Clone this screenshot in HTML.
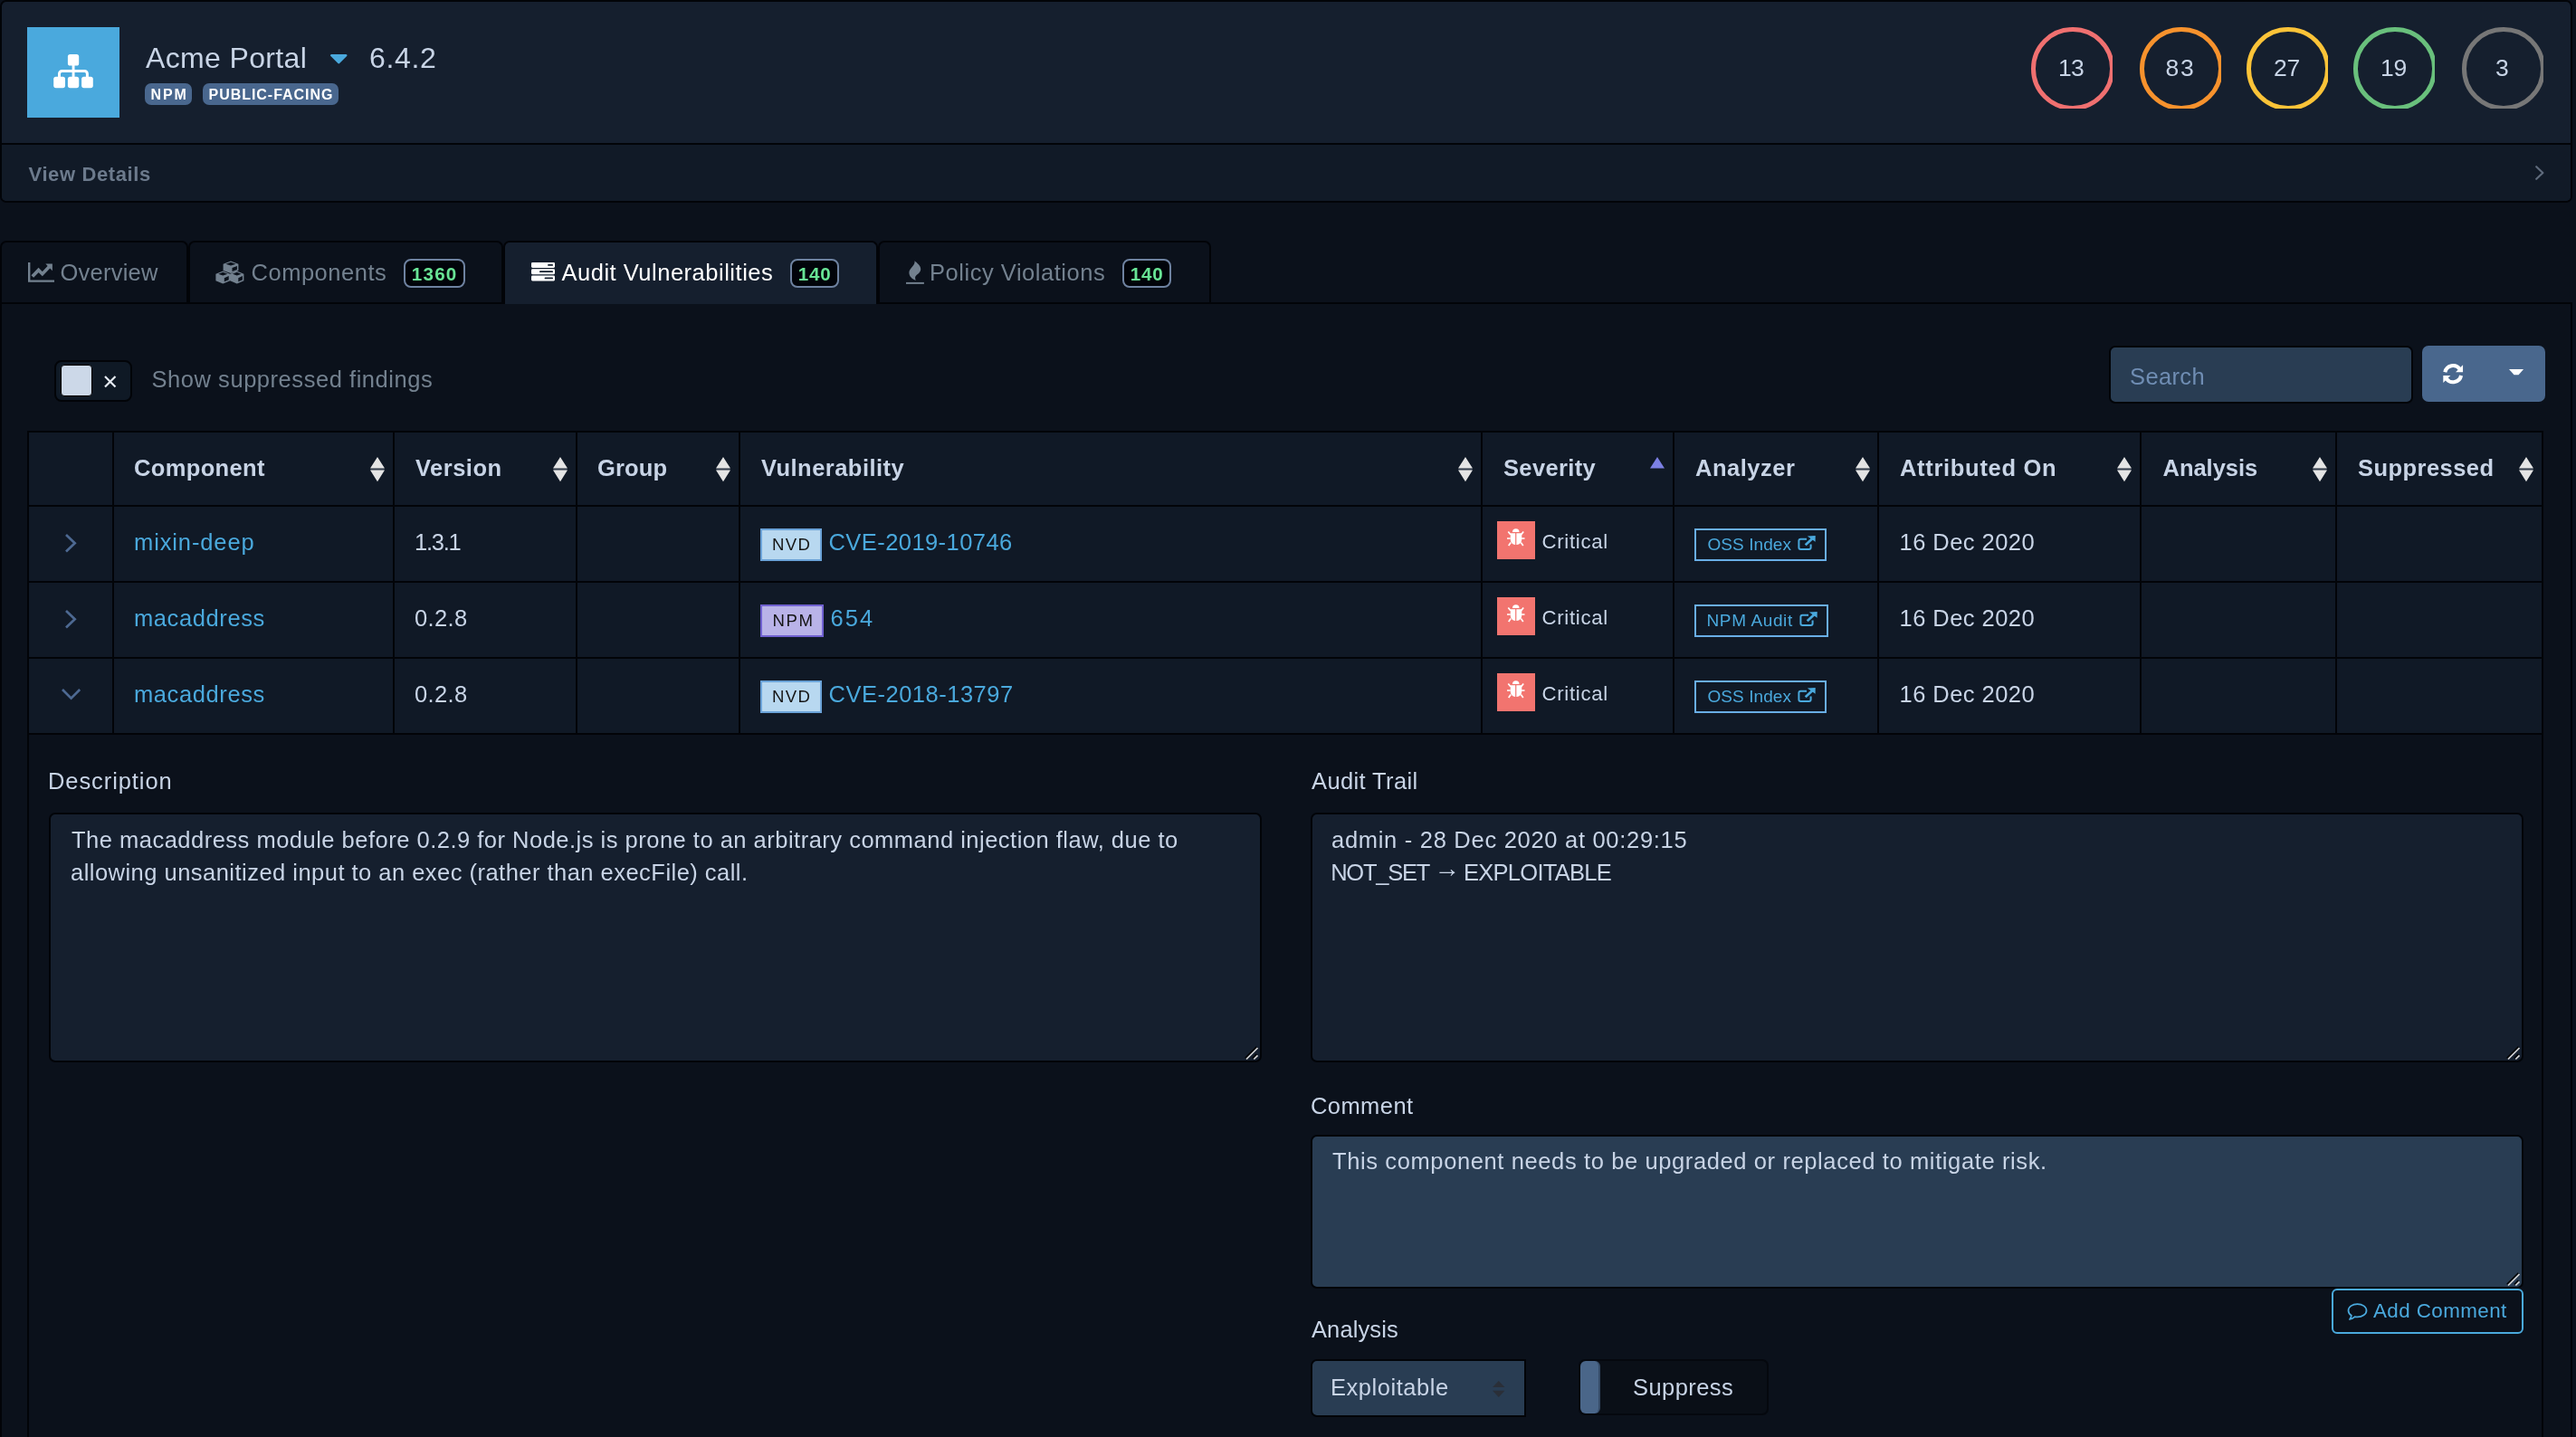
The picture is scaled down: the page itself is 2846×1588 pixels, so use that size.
<!DOCTYPE html>
<html lang="en">
<head>
<meta charset="utf-8">
<title>Dependency-Track - Acme Portal</title>
<style>
*{box-sizing:border-box;margin:0;padding:0}
html,body{width:2846px;height:1588px;overflow:hidden}
body{position:relative;background:#0b111b;font-family:"Liberation Sans",sans-serif;color:#c8d4e6}
.abs,.t,.cell,.tab,.ring,.badge,.pill{position:absolute}
.t{white-space:pre;line-height:1;display:block}
.texts{position:absolute;left:0;top:0;width:2846px;height:1588px;z-index:10;will-change:transform}
svg{position:absolute;display:block;overflow:visible}
.card{left:0;top:0;width:2842px;height:224px;background:#151f2e;border:2px solid #020408;border-radius:7px;overflow:hidden}
.card-footer{left:0;top:156px;width:2838px;height:64px;background:#111a27;border-top:2px solid #020408}
.logo{left:30px;top:30px;width:102px;height:100px;background:#4aa9dd}
.pill{height:24px;top:92px;background:#49678e;border-radius:7px}
.ringbox{position:absolute;top:30px;width:90px;height:90px;overflow:hidden}
.ring{left:0;top:0;width:91.5px;height:91.5px;border-radius:50%;border:5.5px solid}
.tab{top:266px;height:68px;border:2px solid #020408;border-bottom:none;border-radius:7px 7px 0 0;background:#0b111b}
.tab.active{background:#151f2e;height:70px;z-index:2}
.tabcontent{left:0;top:334px;width:2842px;height:1300px;border:2px solid #020408;background:#0b111b}
.badge{top:286px;height:32px;border:2.3px solid #6e82a0;border-radius:8px;background:#01040a}
.switch{left:60px;top:398px;width:86px;height:46px;border:2px solid #020408;border-radius:8px;background:#0f1925}
.switch i{position:absolute;left:4.5px;top:2.5px;width:35px;height:35px;background:#ccd8e8;border:1.5px solid #000;border-radius:4px}
.search{left:2330px;top:382px;width:336px;height:64px;border:2px solid #020408;border-radius:7px;background:#293d53}
.btngroup{left:2676px;top:382px;width:136px;height:62px;border-radius:7px;background:#49678d}
.table{left:30px;top:476px;width:2780px;height:1200px;background:#020408}
.cell{background:#101926}
.detail{left:32px;top:812px;width:2776px;height:800px;background:#0b111b}
.ta{border:2px solid #020408;border-radius:7px;background:#151f2e}
.ta.edit{background:#293d53}
.srcbadge{position:absolute;height:36px;border:2px solid}
.sev{position:absolute;width:42px;height:42px;background:#f2746f}
.outbadge{position:absolute;height:36px;border:2px solid #69aee6}
.addbtn{left:2576px;top:1424px;width:212px;height:50px;border:2.5px solid #4aaadd;border-radius:6px}
.select{left:1448px;top:1502px;width:238px;height:64px;border:2px solid #020408;border-radius:7px 0 0 7px;background:#293d53}
.toggle{left:1744px;top:1502px;width:210px;height:62px;border:2px solid #05080e;border-radius:7px;background:#0a0f17}
.toggle i{position:absolute;left:0;top:0;width:22px;height:58px;background:#4a6689;border-radius:6px;border-right:2px solid #364c68}

</style>
</head>
<body>
<div class="abs card">
<div class="abs logo" style="left:28px;top:28px"></div>
<div class="abs card-footer"></div>
</div>
<svg style="left:59px;top:60px" width="44" height="37.500" viewBox="0 0 44 37.500" fill="#fff">
<rect x="15.900" y="-0.100" width="12.300" height="12.700" rx="2.600"/>
<rect x="0.200" y="24.700" width="12.800" height="12.500" rx="2.600"/><rect x="15.900" y="24.700" width="12.300" height="12.500" rx="2.600"/><rect x="31.100" y="24.700" width="12.700" height="12.500" rx="2.600"/>
<rect x="20.600" y="12" width="2.900" height="13.500"/><path d="M6.500 25.500V21.400a3 3 0 0 1 3-3H34.400a3 3 0 0 1 3 3V25.500" fill="none" stroke="#fff" stroke-width="3"/>
</svg>
<svg style="left:364.5px;top:60px" width="18.5" height="10.5" viewBox="0 0 18.5 10.5"><path d="M1.2 0h16.1a1.2 1.2 0 0 1 .85 2.05l-8.05 8.05a1.2 1.2 0 0 1-1.7 0L.35 2.05A1.2 1.2 0 0 1 1.2 0z" fill="#4aa9dd"/></svg>
<div class="pill" style="left:160px;width:52px"></div>
<div class="pill" style="left:224px;width:150px"></div>
<div class="ringbox" style="left:2244px"><div class="ring" style="border-color:#f07070"></div></div>
<div class="ringbox" style="left:2364px"><div class="ring" style="border-color:#f7922d"></div></div>
<div class="ringbox" style="left:2482px"><div class="ring" style="border-color:#fbc338"></div></div>
<div class="ringbox" style="left:2600px"><div class="ring" style="border-color:#69c07c"></div></div>
<div class="ringbox" style="left:2720px"><div class="ring" style="border-color:#777777"></div></div>
<svg style="left:2801px;top:183px" width="10" height="16" viewBox="0 0 10 16"><path d="M1.2 1.2L8.4 8 1.2 14.8" fill="none" stroke="#5f6b7c" stroke-width="2.2" stroke-linecap="round" stroke-linejoin="round"/></svg>
<div class="abs tabcontent"></div>
<div class="tab" style="left:0px;width:208px"></div>
<div class="tab" style="left:208px;width:348px"></div>
<div class="tab active" style="left:556px;width:414px"></div>
<div class="tab" style="left:970px;width:368px"></div>
<div class="badge" style="left:446px;width:68px;z-index:3"></div>
<div class="badge" style="left:873px;width:54px;z-index:3"></div>
<div class="badge" style="left:1240px;width:54px;z-index:3"></div>
<svg style="left:30.500px;top:290px;z-index:3" width="29" height="22" viewBox="0 0 29 22" fill="none" stroke="#73818f">
<path d="M1.200 0v20.600H29" stroke-width="2.400"/><path d="M4.800 15.600l6.800-7.200 4.200 4.300 7.600-8" stroke-width="3.700" stroke-linejoin="miter"/><path d="M19.300 1.600h7.600v7.600z" fill="#73818f" stroke="none"/></svg>
<svg style="left:237.500px;top:288px;z-index:3" width="32" height="26" viewBox="0 0 32 26" fill="#73818f" fill-rule="evenodd">
<path d="M17.00 0.50L25.40 3.63L25.40 10.97L17.00 14.10L8.60 10.97L8.60 3.63zM17.00 1.85L11.50 3.63L17.00 5.41L22.50 3.63zM18.50 8.06L18.50 11.90L23.90 9.97L23.90 5.93zM8.30 11.40L16.20 14.64L16.20 22.26L8.30 25.50L0.40 22.26L0.40 14.64zM8.30 12.75L3.30 14.64L8.30 16.54L13.30 14.64zM9.80 19.19L9.80 23.30L14.70 21.26L14.70 16.94zM23.80 11.40L31.40 14.64L31.40 22.26L23.80 25.50L16.20 22.26L16.20 14.64zM23.80 12.75L19.10 14.64L23.80 16.54L28.50 14.64zM25.30 19.19L25.30 23.30L29.90 21.26L29.90 16.94z"/></svg>
<svg style="left:587px;top:289.800px;z-index:3" width="26" height="20.500" viewBox="0 0 26 20.500" fill="#fff">
<rect x="0" y="0" width="26" height="5.900" rx="1.300"/><rect x="0" y="7.250" width="26" height="5.900" rx="1.300"/><rect x="0" y="14.500" width="26" height="5.900" rx="1.300"/>
<g fill="#151f2e"><rect x="18.100" y="2.100" width="5.900" height="1.700" rx="0.850"/><rect x="9" y="9.350" width="15" height="1.700" rx="0.850"/><rect x="14.600" y="16.600" width="9.400" height="1.700" rx="0.850"/></g></svg>
<svg style="left:1001px;top:288px;z-index:3" width="20" height="26" viewBox="0 0 20 26" fill="#73818f">
<path d="M9.500 0.200C12 2.500 16.500 5.500 16.200 9.700C16 14 10.500 15.500 10.100 18.500C10 19.800 10.300 20.800 10.800 21.850C7 20.500 3.200 17.500 3.400 13C3.600 8 10.500 5.500 9.500 0.200z"/>
<rect x="0" y="23.900" width="19.900" height="1.950"/></svg>
<div class="abs switch"><i></i></div>
<svg style="left:115px;top:415px" width="13.500" height="13.500" viewBox="0 0 13.500 13.500"><path d="M1 1l11.500 11.500M12.500 1L1 12.500" stroke="#e6ebf2" stroke-width="2.200" fill="none"/></svg>
<div class="abs search"></div>
<div class="abs btngroup"></div>
<svg style="left:2698.800px;top:401.800px" width="22.400" height="22.300" viewBox="0 0 22.400 22.300" fill="none" stroke="#fff" stroke-width="4.100">
<path d="M2.300 9.260A9.100 9.100 0 0 1 18.650 5.930"/><path d="M20.100 13.040A9.100 9.100 0 0 1 3.750 16.370"/>
<path d="M22.100 1.200v8.100H14z" fill="#fff" stroke="none"/><path d="M0.300 21.100V13h8.100z" fill="#fff" stroke="none"/></svg>
<svg style="left:2771.900px;top:407.800px" width="16.100" height="6.300" viewBox="0 0 16.100 6.300"><path d="M0 0h16.100l-5.550 6.300h-5z" fill="#fff"/></svg>
<div class="abs table"></div>
<div class="cell" style="left:32px;top:478px;width:92px;height:80px"></div>
<div class="cell" style="left:126px;top:478px;width:308px;height:80px"></div>
<div class="cell" style="left:436px;top:478px;width:200px;height:80px"></div>
<div class="cell" style="left:638px;top:478px;width:178px;height:80px"></div>
<div class="cell" style="left:818px;top:478px;width:818px;height:80px"></div>
<div class="cell" style="left:1638px;top:478px;width:210px;height:80px"></div>
<div class="cell" style="left:1850px;top:478px;width:224px;height:80px"></div>
<div class="cell" style="left:2076px;top:478px;width:288px;height:80px"></div>
<div class="cell" style="left:2366px;top:478px;width:214px;height:80px"></div>
<div class="cell" style="left:2582px;top:478px;width:226px;height:80px"></div>
<div class="cell" style="left:32px;top:560px;width:92px;height:82px"></div>
<div class="cell" style="left:126px;top:560px;width:308px;height:82px"></div>
<div class="cell" style="left:436px;top:560px;width:200px;height:82px"></div>
<div class="cell" style="left:638px;top:560px;width:178px;height:82px"></div>
<div class="cell" style="left:818px;top:560px;width:818px;height:82px"></div>
<div class="cell" style="left:1638px;top:560px;width:210px;height:82px"></div>
<div class="cell" style="left:1850px;top:560px;width:224px;height:82px"></div>
<div class="cell" style="left:2076px;top:560px;width:288px;height:82px"></div>
<div class="cell" style="left:2366px;top:560px;width:214px;height:82px"></div>
<div class="cell" style="left:2582px;top:560px;width:226px;height:82px"></div>
<div class="cell" style="left:32px;top:644px;width:92px;height:82px"></div>
<div class="cell" style="left:126px;top:644px;width:308px;height:82px"></div>
<div class="cell" style="left:436px;top:644px;width:200px;height:82px"></div>
<div class="cell" style="left:638px;top:644px;width:178px;height:82px"></div>
<div class="cell" style="left:818px;top:644px;width:818px;height:82px"></div>
<div class="cell" style="left:1638px;top:644px;width:210px;height:82px"></div>
<div class="cell" style="left:1850px;top:644px;width:224px;height:82px"></div>
<div class="cell" style="left:2076px;top:644px;width:288px;height:82px"></div>
<div class="cell" style="left:2366px;top:644px;width:214px;height:82px"></div>
<div class="cell" style="left:2582px;top:644px;width:226px;height:82px"></div>
<div class="cell" style="left:32px;top:728px;width:92px;height:82px"></div>
<div class="cell" style="left:126px;top:728px;width:308px;height:82px"></div>
<div class="cell" style="left:436px;top:728px;width:200px;height:82px"></div>
<div class="cell" style="left:638px;top:728px;width:178px;height:82px"></div>
<div class="cell" style="left:818px;top:728px;width:818px;height:82px"></div>
<div class="cell" style="left:1638px;top:728px;width:210px;height:82px"></div>
<div class="cell" style="left:1850px;top:728px;width:224px;height:82px"></div>
<div class="cell" style="left:2076px;top:728px;width:288px;height:82px"></div>
<div class="cell" style="left:2366px;top:728px;width:214px;height:82px"></div>
<div class="cell" style="left:2582px;top:728px;width:226px;height:82px"></div>
<div class="abs detail"></div>
<svg style="left:409px;top:505.400px" width="16" height="27.200" viewBox="0 0 16 27.200"><rect x="0.500" y="12.500" width="15" height="2.200" fill="#343e4e"/><path d="M8 0l8 12.600H0zM8 27.200L0 14.600h16z" fill="#e4e4e4"/></svg>
<svg style="left:611px;top:505.400px" width="16" height="27.200" viewBox="0 0 16 27.200"><rect x="0.500" y="12.500" width="15" height="2.200" fill="#343e4e"/><path d="M8 0l8 12.600H0zM8 27.200L0 14.600h16z" fill="#e4e4e4"/></svg>
<svg style="left:791px;top:505.400px" width="16" height="27.200" viewBox="0 0 16 27.200"><rect x="0.500" y="12.500" width="15" height="2.200" fill="#343e4e"/><path d="M8 0l8 12.600H0zM8 27.200L0 14.600h16z" fill="#e4e4e4"/></svg>
<svg style="left:1611px;top:505.400px" width="16" height="27.200" viewBox="0 0 16 27.200"><rect x="0.500" y="12.500" width="15" height="2.200" fill="#343e4e"/><path d="M8 0l8 12.600H0zM8 27.200L0 14.600h16z" fill="#e4e4e4"/></svg>
<svg style="left:2049.5px;top:505.400px" width="16" height="27.200" viewBox="0 0 16 27.200"><rect x="0.500" y="12.500" width="15" height="2.200" fill="#343e4e"/><path d="M8 0l8 12.600H0zM8 27.200L0 14.600h16z" fill="#e4e4e4"/></svg>
<svg style="left:2339px;top:505.400px" width="16" height="27.200" viewBox="0 0 16 27.200"><rect x="0.500" y="12.500" width="15" height="2.200" fill="#343e4e"/><path d="M8 0l8 12.600H0zM8 27.200L0 14.600h16z" fill="#e4e4e4"/></svg>
<svg style="left:2555px;top:505.400px" width="16" height="27.200" viewBox="0 0 16 27.200"><rect x="0.500" y="12.500" width="15" height="2.200" fill="#343e4e"/><path d="M8 0l8 12.600H0zM8 27.200L0 14.600h16z" fill="#e4e4e4"/></svg>
<svg style="left:2782.5px;top:505.400px" width="16" height="27.200" viewBox="0 0 16 27.200"><rect x="0.500" y="12.500" width="15" height="2.200" fill="#343e4e"/><path d="M8 0l8 12.600H0zM8 27.200L0 14.600h16z" fill="#e4e4e4"/></svg>
<svg style="left:1823px;top:505.400px" width="16" height="12.600" viewBox="0 0 16 12.600"><path d="M8 0l8 12.600H0z" fill="#7c80e4"/></svg>
<svg style="left:72px;top:589.5px" width="12.500" height="20.500" viewBox="0 0 12.500 20.500"><path d="M1 1l9.700 9.250L1 19.500" fill="none" stroke="#4d6992" stroke-width="2.700"/></svg>
<div class="srcbadge" style="left:840px;top:584px;width:68px;background:#b8d8f0;border-color:#6ba3d8"></div>
<div class="sev" style="left:1654px;top:576px"></div>
<svg style="left:1665px;top:584px" width="19.500" height="19.500" viewBox="0 0 19.500 19.500" fill="#fff"><path d="M6 4.100a3.750 3.750 0 0 1 7.500 0zM3.750 5.200h5.400v12.800c-3.200-.3-5.400-2.600-5.400-6zM10.350 5.200h5.900v6.800c0 3.400-2.200 5.700-5.400 6h-.5z"/><path d="M1.300 3.400l2.600 3.400M18.200 3.400l-2.600 3.400M0 11h3.750M15.750 11h3.750M4.200 15.400l-2.500 3.500M15.300 15.400l2.500 3.500" stroke="#fff" stroke-width="1.700" fill="none"/></svg>
<div class="outbadge" style="left:1872px;top:584px;width:146px"></div>
<svg style="left:1985.5px;top:592px" width="20" height="16.500" viewBox="0 0 20 16.500" fill="none" stroke="#4aa9dd" stroke-width="2"><path d="M10 3.800H3.400a2 2 0 0 0-2 2v7.300a2 2 0 0 0 2 2h9.200a2 2 0 0 0 2-2V9.600"/><path d="M8.700 10.300l8.600-8" stroke-width="2.700"/><path d="M10.800 0.500L19.700 0l-.1 6.800z" fill="#4aa9dd" stroke="none"/></svg>
<svg style="left:72px;top:673.5px" width="12.500" height="20.500" viewBox="0 0 12.500 20.500"><path d="M1 1l9.700 9.250L1 19.500" fill="none" stroke="#4d6992" stroke-width="2.700"/></svg>
<div class="srcbadge" style="left:840px;top:668px;width:70px;background:#b9b3e8;border-color:#7061d0"></div>
<div class="sev" style="left:1654px;top:660px"></div>
<svg style="left:1665px;top:668px" width="19.500" height="19.500" viewBox="0 0 19.500 19.500" fill="#fff"><path d="M6 4.100a3.750 3.750 0 0 1 7.500 0zM3.750 5.200h5.400v12.800c-3.200-.3-5.400-2.600-5.400-6zM10.350 5.200h5.900v6.800c0 3.400-2.200 5.700-5.400 6h-.5z"/><path d="M1.300 3.400l2.600 3.400M18.200 3.400l-2.600 3.400M0 11h3.750M15.750 11h3.750M4.200 15.400l-2.500 3.500M15.300 15.400l2.500 3.500" stroke="#fff" stroke-width="1.700" fill="none"/></svg>
<div class="outbadge" style="left:1872px;top:668px;width:148px"></div>
<svg style="left:1988px;top:676px" width="20" height="16.500" viewBox="0 0 20 16.500" fill="none" stroke="#4aa9dd" stroke-width="2"><path d="M10 3.800H3.400a2 2 0 0 0-2 2v7.300a2 2 0 0 0 2 2h9.200a2 2 0 0 0 2-2V9.600"/><path d="M8.700 10.300l8.600-8" stroke-width="2.700"/><path d="M10.800 0.500L19.700 0l-.1 6.800z" fill="#4aa9dd" stroke="none"/></svg>
<svg style="left:68px;top:761.2px" width="21.200" height="12.500" viewBox="0 0 21.200 12.500"><path d="M1 1l9.600 9.700L20.200 1" fill="none" stroke="#4d6992" stroke-width="2.700"/></svg>
<div class="srcbadge" style="left:840px;top:752px;width:68px;background:#b8d8f0;border-color:#6ba3d8"></div>
<div class="sev" style="left:1654px;top:744px"></div>
<svg style="left:1665px;top:752px" width="19.500" height="19.500" viewBox="0 0 19.500 19.500" fill="#fff"><path d="M6 4.100a3.750 3.750 0 0 1 7.500 0zM3.750 5.200h5.400v12.800c-3.200-.3-5.400-2.600-5.400-6zM10.350 5.200h5.900v6.800c0 3.400-2.200 5.700-5.400 6h-.5z"/><path d="M1.300 3.400l2.600 3.400M18.200 3.400l-2.600 3.400M0 11h3.750M15.750 11h3.750M4.200 15.400l-2.500 3.500M15.300 15.400l2.500 3.500" stroke="#fff" stroke-width="1.700" fill="none"/></svg>
<div class="outbadge" style="left:1872px;top:752px;width:146px"></div>
<svg style="left:1985.5px;top:760px" width="20" height="16.500" viewBox="0 0 20 16.500" fill="none" stroke="#4aa9dd" stroke-width="2"><path d="M10 3.800H3.400a2 2 0 0 0-2 2v7.300a2 2 0 0 0 2 2h9.200a2 2 0 0 0 2-2V9.600"/><path d="M8.700 10.300l8.600-8" stroke-width="2.700"/><path d="M10.800 0.500L19.700 0l-.1 6.800z" fill="#4aa9dd" stroke="none"/></svg>
<div class="abs ta" style="left:54px;top:898px;width:1340px;height:276px"></div>
<div class="abs ta" style="left:1448px;top:898px;width:1340px;height:276px"></div>
<div class="abs ta edit" style="left:1448px;top:1254px;width:1340px;height:170px"></div>
<svg style="left:1376.3px;top:1157px" width="14" height="14" viewBox="0 0 14 14"><path d="M-0.300 12.300L12.300 -0.300M7.900 12.300l4.400-4.400" stroke="#000" stroke-width="1.500" fill="none"/><path d="M1 13.500L13.500 1M9.300 13.500l4.200-4.200" stroke="#d4d4d4" stroke-width="1.700" fill="none"/></svg>
<svg style="left:2770.3px;top:1157px" width="14" height="14" viewBox="0 0 14 14"><path d="M-0.300 12.300L12.300 -0.300M7.900 12.300l4.400-4.400" stroke="#000" stroke-width="1.500" fill="none"/><path d="M1 13.500L13.500 1M9.300 13.500l4.200-4.200" stroke="#d4d4d4" stroke-width="1.700" fill="none"/></svg>
<svg style="left:2770.3px;top:1407px" width="14" height="14" viewBox="0 0 14 14"><path d="M-0.300 12.300L12.300 -0.300M7.900 12.300l4.400-4.400" stroke="#000" stroke-width="1.500" fill="none"/><path d="M1 13.500L13.500 1M9.300 13.500l4.200-4.200" stroke="#d4d4d4" stroke-width="1.700" fill="none"/></svg>
<div class="abs addbtn"></div>
<svg style="left:2592.500px;top:1440px" width="22.500" height="19.500" viewBox="0 0 22.500 19.500" fill="none" stroke="#4aa9dd" stroke-width="1.750"><path d="M11.500 1C17 1 21.500 4.200 21.500 8.200s-4.500 7.200-10 7.200c-1 0-2-.1-2.900-.3-1.600 1.400-3.600 2.400-5.600 2.900 1-1.300 1.700-2.700 1.900-4.300C2.800 12.300 1.500 10.400 1.500 8.200 1.500 4.200 6 1 11.500 1z" stroke-linejoin="round"/></svg>
<div class="abs select"></div>
<svg style="left:1649px;top:1526px" width="13.500" height="17.900" viewBox="0 0 13.500 17.900" fill="#2a2f38"><path d="M6.750 0l6.750 7H0zM6.750 17.900L0 10.800h13.500z"/></svg>
<div class="abs toggle"><i></i></div>
<div class="texts">
<span class="t" style="left:161.00px;top:47.91px;font-size:32px;letter-spacing:0.353px;color:#c8d4e6;">Acme Portal</span>
<span class="t" style="left:408.00px;top:47.91px;font-size:32px;letter-spacing:0.656px;color:#c8d4e6;">6.4.2</span>
<span class="t" style="left:166.50px;top:97.45px;font-size:16px;letter-spacing:1.887px;color:#ffffff;font-weight:700;">NPM</span>
<span class="t" style="left:230.50px;top:97.45px;font-size:16px;letter-spacing:0.968px;color:#ffffff;font-weight:700;">PUBLIC-FACING</span>
<span class="t" style="left:31.50px;top:182.37px;font-size:22px;letter-spacing:0.613px;color:#6c7a8c;font-weight:700;">View Details</span>
<span class="t" style="left:2274.00px;top:62.06px;font-size:26.5px;letter-spacing:-0.738px;color:#c8d4e6;">13</span>
<span class="t" style="left:2392.50px;top:62.06px;font-size:26.5px;letter-spacing:1.762px;color:#c8d4e6;">83</span>
<span class="t" style="left:2512.00px;top:62.06px;font-size:26.5px;letter-spacing:-0.238px;color:#c8d4e6;">27</span>
<span class="t" style="left:2630.00px;top:62.06px;font-size:26.5px;letter-spacing:-0.238px;color:#c8d4e6;">19</span>
<span class="t" style="left:2757.00px;top:62.06px;font-size:26.5px;letter-spacing:0.000px;color:#c8d4e6;">3</span>
<span class="t" style="left:66.50px;top:288.91px;font-size:25.5px;letter-spacing:0.235px;color:#73818f;">Overview</span>
<span class="t" style="left:277.50px;top:288.91px;font-size:25.5px;letter-spacing:0.519px;color:#73818f;">Components</span>
<span class="t" style="left:454.80px;top:292.96px;font-size:20.6px;letter-spacing:1.213px;color:#68e495;font-weight:700;">1360</span>
<span class="t" style="left:620.50px;top:288.91px;font-size:25.5px;letter-spacing:0.512px;color:#ffffff;">Audit Vulnerabilities</span>
<span class="t" style="left:881.70px;top:292.96px;font-size:20.6px;letter-spacing:0.797px;color:#68e495;font-weight:700;">140</span>
<span class="t" style="left:1027.00px;top:288.91px;font-size:25.5px;letter-spacing:0.534px;color:#73818f;">Policy Violations</span>
<span class="t" style="left:1248.70px;top:292.96px;font-size:20.6px;letter-spacing:0.797px;color:#68e495;font-weight:700;">140</span>
<span class="t" style="left:167.50px;top:407.41px;font-size:25.5px;letter-spacing:0.546px;color:#73818f;">Show suppressed findings</span>
<span class="t" style="left:2353.00px;top:403.91px;font-size:25.5px;letter-spacing:0.377px;color:#6f8db3;">Search</span>
<span class="t" style="left:148.00px;top:505.41px;font-size:25.5px;letter-spacing:0.356px;color:#c8d4e6;font-weight:700;">Component</span>
<span class="t" style="left:459.00px;top:505.41px;font-size:25.5px;letter-spacing:0.492px;color:#c8d4e6;font-weight:700;">Version</span>
<span class="t" style="left:660.00px;top:505.41px;font-size:25.5px;letter-spacing:0.147px;color:#c8d4e6;font-weight:700;">Group</span>
<span class="t" style="left:841.00px;top:505.41px;font-size:25.5px;letter-spacing:0.466px;color:#c8d4e6;font-weight:700;">Vulnerability</span>
<span class="t" style="left:1661.00px;top:505.41px;font-size:25.5px;letter-spacing:0.349px;color:#c8d4e6;font-weight:700;">Severity</span>
<span class="t" style="left:1873.00px;top:505.41px;font-size:25.5px;letter-spacing:0.518px;color:#c8d4e6;font-weight:700;">Analyzer</span>
<span class="t" style="left:2099.00px;top:505.41px;font-size:25.5px;letter-spacing:0.689px;color:#c8d4e6;font-weight:700;">Attributed On</span>
<span class="t" style="left:2389.50px;top:505.41px;font-size:25.5px;letter-spacing:-0.030px;color:#c8d4e6;font-weight:700;">Analysis</span>
<span class="t" style="left:2605.00px;top:505.41px;font-size:25.5px;letter-spacing:0.457px;color:#c8d4e6;font-weight:700;">Suppressed</span>
<span class="t" style="left:148.00px;top:587.41px;font-size:25.5px;letter-spacing:0.884px;color:#4aa9dd;">mixin-deep</span>
<span class="t" style="left:458.00px;top:587.41px;font-size:25.5px;letter-spacing:-1.258px;color:#c8d4e6;">1.3.1</span>
<span class="t" style="left:853.00px;top:593.25px;font-size:18.6px;letter-spacing:1.335px;color:#151515;">NVD</span>
<span class="t" style="left:915.50px;top:587.41px;font-size:25.5px;letter-spacing:0.433px;color:#4aa9dd;">CVE-2019-10746</span>
<span class="t" style="left:1703.50px;top:588.20px;font-size:22.2px;letter-spacing:0.690px;color:#c8d4e6;">Critical</span>
<span class="t" style="left:1886.50px;top:591.91px;font-size:19px;letter-spacing:0.077px;color:#4aa9dd;">OSS Index</span>
<span class="t" style="left:2098.50px;top:587.41px;font-size:25.5px;letter-spacing:0.457px;color:#c8d4e6;">16 Dec 2020</span>
<span class="t" style="left:148.00px;top:671.41px;font-size:25.5px;letter-spacing:0.595px;color:#4aa9dd;">macaddress</span>
<span class="t" style="left:458.00px;top:671.41px;font-size:25.5px;letter-spacing:0.367px;color:#c8d4e6;">0.2.8</span>
<span class="t" style="left:853.50px;top:677.25px;font-size:18.6px;letter-spacing:1.585px;color:#151515;">NPM</span>
<span class="t" style="left:917.50px;top:671.41px;font-size:25.5px;letter-spacing:2.068px;color:#4aa9dd;">654</span>
<span class="t" style="left:1703.50px;top:672.20px;font-size:22.2px;letter-spacing:0.690px;color:#c8d4e6;">Critical</span>
<span class="t" style="left:1885.50px;top:675.91px;font-size:19px;letter-spacing:0.622px;color:#4aa9dd;">NPM Audit</span>
<span class="t" style="left:2098.50px;top:671.41px;font-size:25.5px;letter-spacing:0.457px;color:#c8d4e6;">16 Dec 2020</span>
<span class="t" style="left:148.00px;top:755.41px;font-size:25.5px;letter-spacing:0.595px;color:#4aa9dd;">macaddress</span>
<span class="t" style="left:458.00px;top:755.41px;font-size:25.5px;letter-spacing:0.367px;color:#c8d4e6;">0.2.8</span>
<span class="t" style="left:853.00px;top:761.25px;font-size:18.6px;letter-spacing:1.335px;color:#151515;">NVD</span>
<span class="t" style="left:915.50px;top:755.41px;font-size:25.5px;letter-spacing:0.510px;color:#4aa9dd;">CVE-2018-13797</span>
<span class="t" style="left:1703.50px;top:756.20px;font-size:22.2px;letter-spacing:0.690px;color:#c8d4e6;">Critical</span>
<span class="t" style="left:1886.50px;top:759.91px;font-size:19px;letter-spacing:0.077px;color:#4aa9dd;">OSS Index</span>
<span class="t" style="left:2098.50px;top:755.41px;font-size:25.5px;letter-spacing:0.457px;color:#c8d4e6;">16 Dec 2020</span>
<span class="t" style="left:53.00px;top:851.41px;font-size:25.5px;letter-spacing:0.913px;color:#c8d4e6;">Description</span>
<span class="t" style="left:1449.00px;top:851.41px;font-size:25.5px;letter-spacing:0.382px;color:#c8d4e6;">Audit Trail</span>
<span class="t" style="left:79.00px;top:915.91px;font-size:25.5px;letter-spacing:0.495px;color:#c8d4e6;">The macaddress module before 0.2.9 for Node.js is prone to an arbitrary command injection flaw, due to</span>
<span class="t" style="left:78.00px;top:951.91px;font-size:25.5px;letter-spacing:0.475px;color:#c8d4e6;">allowing unsanitized input to an exec (rather than execFile) call.</span>
<span class="t" style="left:1471.00px;top:915.91px;font-size:25.5px;letter-spacing:0.709px;color:#c8d4e6;">admin - 28 Dec 2020 at 00:29:15</span>
<span class="t" style="left:1470.20px;top:951.91px;font-size:25.5px;letter-spacing:-1.237px;color:#c8d4e6;">NOT_SET</span>
<span class="t" style="left:1584.60px;top:944.67px;font-size:28.5px;letter-spacing:0.000px;color:#c8d4e6;">→</span>
<span class="t" style="left:1617.00px;top:951.91px;font-size:25.5px;letter-spacing:-0.721px;color:#c8d4e6;">EXPLOITABLE</span>
<span class="t" style="left:1448.00px;top:1209.91px;font-size:25.5px;letter-spacing:0.426px;color:#c8d4e6;">Comment</span>
<span class="t" style="left:1472.00px;top:1271.41px;font-size:25.5px;letter-spacing:0.613px;color:#c8d4e6;">This component needs to be upgraded or replaced to mitigate risk.</span>
<span class="t" style="left:1449.00px;top:1457.41px;font-size:25.5px;letter-spacing:0.114px;color:#c8d4e6;">Analysis</span>
<span class="t" style="left:1470.00px;top:1521.41px;font-size:25.5px;letter-spacing:0.543px;color:#c8d4e6;">Exploitable</span>
<span class="t" style="left:1804.00px;top:1521.41px;font-size:25.5px;letter-spacing:0.432px;color:#c8d4e6;">Suppress</span>
<span class="t" style="left:2622.00px;top:1437.53px;font-size:22.4px;letter-spacing:0.411px;color:#4aa9dd;">Add Comment</span>
</div>
</body>
</html>
